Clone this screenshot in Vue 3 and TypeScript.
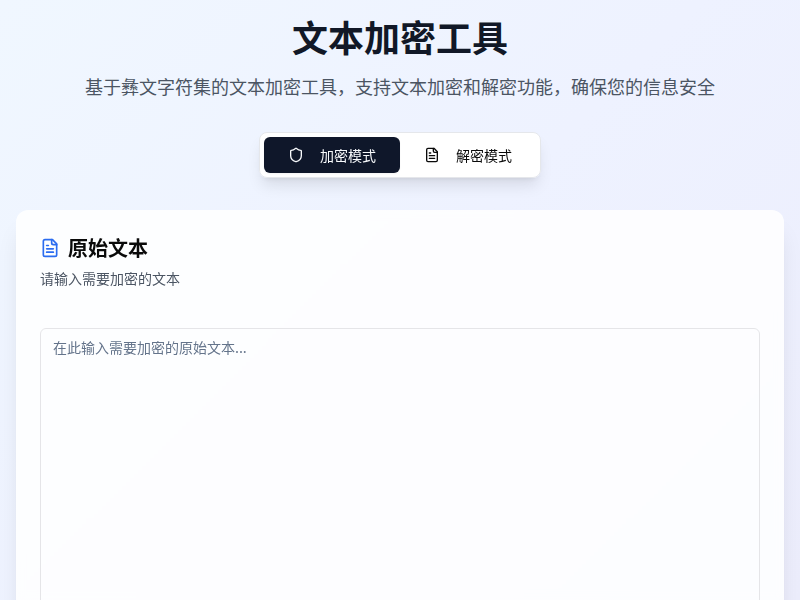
<script setup lang="ts">
import { ref } from 'vue'

const mode = ref<'encrypt' | 'decrypt'>('encrypt')
const text = ref('')
</script>

<template>
  <div class="page">
    <header class="head">
      <h1>文本加密工具</h1>
      <p>基于彝文字符集的文本加密工具，支持文本加密和解密功能，确保您的信息安全</p>
    </header>
    <div class="toggle-wrap">
      <div class="toggle">
        <button class="tab" :class="{ active: mode === 'encrypt' }" @click="mode = 'encrypt'">
          <svg class="ico" viewBox="0 0 24 24" fill="none" stroke="currentColor" stroke-width="2" stroke-linecap="round" stroke-linejoin="round">
            <path d="M20 13c0 5-3.5 7.5-7.66 8.95a1 1 0 0 1-.67-.01C7.5 20.5 4 18 4 13V6a1 1 0 0 1 1-1c2 0 4.5-1.2 6.24-2.72a1.17 1.17 0 0 1 1.52 0C14.51 3.81 17 5 19 5a1 1 0 0 1 1 1z" />
          </svg>
          <span>加密模式</span>
        </button>
        <button class="tab" :class="{ active: mode === 'decrypt' }" @click="mode = 'decrypt'">
          <svg class="ico" viewBox="0 0 24 24" fill="none" stroke="currentColor" stroke-width="2" stroke-linecap="round" stroke-linejoin="round">
            <path d="M15 2H6a2 2 0 0 0-2 2v16a2 2 0 0 0 2 2h12a2 2 0 0 0 2-2V7Z" />
            <path d="M14 2v4a2 2 0 0 0 2 2h4" />
            <path d="M10 9H8" />
            <path d="M16 13H8" />
            <path d="M16 17H8" />
          </svg>
          <span>解密模式</span>
        </button>
      </div>
    </div>
    <section class="card">
      <h2>
        <svg class="title-ico" viewBox="0 0 24 24" fill="none" stroke="currentColor" stroke-width="2" stroke-linecap="round" stroke-linejoin="round">
          <path d="M15 2H6a2 2 0 0 0-2 2v16a2 2 0 0 0 2 2h12a2 2 0 0 0 2-2V7Z" />
          <path d="M14 2v4a2 2 0 0 0 2 2h4" />
          <path d="M10 9H8" />
          <path d="M16 13H8" />
          <path d="M16 17H8" />
        </svg>
        <span>原始文本</span>
      </h2>
      <p class="desc">请输入需要加密的文本</p>
      <textarea v-model="text" class="input" placeholder="在此输入需要加密的原始文本..."></textarea>
    </section>
  </div>
</template>

<style>
html, body { margin: 0; padding: 0; overflow: hidden; }
</style>

<style scoped>
.page {
  box-sizing: border-box;
  width: 800px;
  height: 600px;
  overflow: hidden;
  padding: 16px 16px 0;
  background: linear-gradient(135deg, #f0f7ff 0%, #eef2ff 50%, #ecedfc 100%);
  font-family: "Noto Sans CJK SC", sans-serif;
}
.head { text-align: center; margin-bottom: 32px; }
h1 {
  margin: 0 0 16px;
  font-size: 36px;
  line-height: 40px;
  font-weight: 700;
  color: #111827;
}
.head p {
  margin: 0;
  font-size: 18px;
  line-height: 28px;
  color: #4b5563;
}
.toggle-wrap { display: flex; justify-content: center; margin-bottom: 32px; }
.toggle {
  display: flex;
  padding: 4px;
  background: rgba(255,255,255,.96);
  backdrop-filter: blur(4px);
  border: 1px solid #e5e7eb;
  border-radius: 8px;
  box-shadow: 0 10px 15px -3px rgba(0,0,0,.1), 0 4px 6px -4px rgba(0,0,0,.1);
}
.tab {
  display: flex;
  align-items: center;
  justify-content: flex-start;
  gap: 16px;
  width: 136px;
  height: 36px;
  padding: 0 24px;
  border: 0;
  border-radius: 6px;
  background: transparent;
  color: #0a0a0a;
  font: 400 14px/20px "Noto Sans CJK SC", sans-serif;
  cursor: pointer;
}
.tab.active {
  background: #0f172a;
  color: #f8fafc;
  box-shadow: 0 1px 2px rgba(0,0,0,.05);
}
.ico { width: 16px; height: 16px; flex: none; }
.card {
  box-sizing: border-box;
  height: 560px;
  padding: 24px;
  background: rgba(255,255,255,.85);
  backdrop-filter: blur(4px);
  border-radius: 12px;
  box-shadow: 0 20px 25px -5px rgba(0,0,0,.1), 0 8px 10px -6px rgba(0,0,0,.1);
}
h2 {
  display: flex;
  align-items: center;
  gap: 8px;
  margin: 0;
  font-size: 20px;
  line-height: 28px;
  font-weight: 600;
  color: #0a0a0a;
}
.title-ico { width: 20px; height: 20px; color: #2b6cf0; flex: none; }
.desc {
  margin: 6px 0 0;
  font-size: 14px;
  line-height: 20px;
  color: #4b5563;
}
.input {
  display: block;
  box-sizing: border-box;
  width: 100%;
  height: 400px;
  margin-top: 40px;
  padding: 8px 12px;
  border: 1px solid #e5e5e8;
  border-radius: 6px;
  background: transparent;
  font: 14px/20px "Noto Sans CJK SC", sans-serif;
  color: #0a0a0a;
  resize: none;
  outline: none;
}
.input::placeholder { color: #64748b; opacity: 1; }
</style>
